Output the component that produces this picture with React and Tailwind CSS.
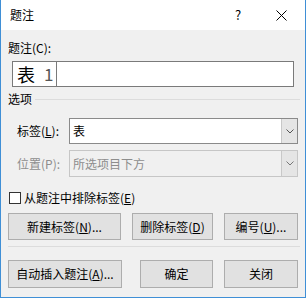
export default function App() {
  const font = { fontFamily: '"Noto Sans CJK SC", "Microsoft YaHei", sans-serif' };
  return (
    <div className="w-[307px] h-[301px] bg-white text-[12px] leading-4 text-black" style={font}>
      <div className="w-[306px] h-[298px] border-x border-b border-[#3f8fd6] flex flex-col">
        {/* title bar */}
        <div className="h-[30px] bg-white flex items-center pl-[9px] shrink-0">
          <span className="flex-1">题注</span>
          <span className="w-[41px] text-[13px]">?</span>
          <svg width="11" height="11" viewBox="0 0 11 11" className="mr-[18px]">
            <path d="M0.5 0.5 L10.5 10.5 M10.5 0.5 L0.5 10.5" stroke="#000" strokeWidth="1" />
          </svg>
        </div>

        {/* body */}
        <div className="flex-1 bg-[#f0f0f0] px-[7px] flex flex-col">
          <div className="mt-[10px] h-4">题注(C):</div>

          <div className="mt-[5px] ml-[4px] w-[282px] h-[26px] border border-[#7a7a7a] bg-white flex items-center">
            <span className="pl-[4px] text-[18px] leading-6">表</span>
            <span className="pl-[9px] text-[17px] leading-6 text-[#555]">1</span>
            <span className="ml-[3px] w-px h-full bg-[#7a7a7a]" />
          </div>

          <div className="mt-[4px] h-4 flex items-center gap-[3px] mr-[-2px]">
            <span>选项</span>
            <span className="flex-1 h-px bg-[#dcdcdc]" />
          </div>

          <div className="mt-[11px] flex items-center h-[26px]">
            <span className="w-[61px] pl-[9px]">标签(<span className="underline">L</span>):</span>
            <div className="flex-1 h-full border border-[#8a8a8a] bg-white flex">
              <span className="flex-1 pl-[3px] flex items-center">表</span>
              <span className="w-[16px] h-full bg-[#e5e5e5] border-l border-[#c8c8c8] flex items-center justify-center">
                <svg width="8" height="5" viewBox="0 0 8 5">
                  <path d="M0.5 0.5 L4 4 L7.5 0.5" stroke="#555" fill="none" />
                </svg>
              </span>
            </div>
          </div>

          <div className="mt-[6px] flex items-center h-[27px] text-[#8d8d8d]">
            <span className="w-[61px] pl-[9px]">位置(P):</span>
            <div className="flex-1 h-full border border-[#c6c6c6] bg-[#f0f0f0] flex">
              <span className="flex-1 pl-[3px] flex items-center">所选项目下方</span>
              <span className="w-[16px] h-full bg-[#e5e5e5] border-l border-[#c8c8c8] flex items-center justify-center">
                <svg width="8" height="5" viewBox="0 0 8 5">
                  <path d="M0.5 0.5 L4 4 L7.5 0.5" stroke="#777" fill="none" />
                </svg>
              </span>
            </div>
          </div>

          <div className="mt-[13px] h-4 flex items-center">
            <span className="ml-[1px] w-[12px] h-[12px] border border-[#333] bg-white" />
            <span className="ml-[3px]">从题注中排除标签(<span className="underline">E</span>)</span>
          </div>

          <div className="mt-[7px] flex h-[27px]">
            <button className="w-[113px] h-full bg-[#e1e1e1] border border-[#adadad]">新建标签(<span className="underline">N</span>)...</button>
            <button className="ml-[11px] w-[81px] h-full bg-[#e1e1e1] border border-[#adadad]">删除标签(<span className="underline">D</span>)</button>
            <button className="ml-[11px] w-[74px] h-full bg-[#e1e1e1] border border-[#adadad]">编号(<span className="underline">U</span>)...</button>
          </div>

          <div className="mt-[6px] h-px bg-[#dcdcdc] mr-[-2px]" />

          <div className="mt-[13px] flex h-[28px]">
            <button className="w-[114px] h-full bg-[#e1e1e1] border border-[#adadad]">自动插入题注(<span className="underline">A</span>)...</button>
            <button className="ml-[18px] w-[73px] h-full bg-[#e1e1e1] border border-[#adadad]">确定</button>
            <button className="ml-[11px] w-[74px] h-full bg-[#e1e1e1] border border-[#adadad]">关闭</button>
          </div>
        </div>
      </div>
    </div>
  );
}
